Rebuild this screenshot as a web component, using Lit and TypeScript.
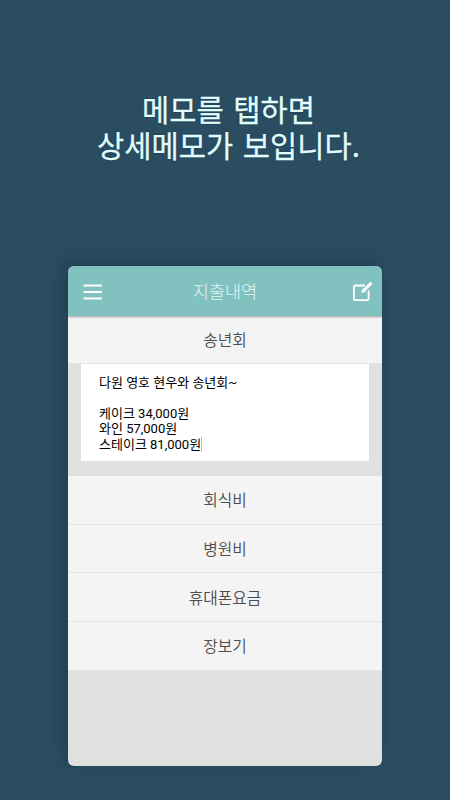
import { LitElement, html, css } from "lit";
import { customElement } from "lit/decorators.js";

@customElement("app-root")
export class AppRoot extends LitElement {
  static styles = css`
    :host { display: flex; flex-direction: column; align-items: center; box-sizing: border-box; width: 450px; height: 800px; background: #2a4d61; font-family: "Noto Sans CJK KR", sans-serif; overflow: hidden; }
    .headline { margin: 91px 0 0 7px; height: 175px; text-align: center; color: #e4fcfc; font-size: 29.6px; line-height: 36px; word-spacing: 3px; -webkit-text-stroke: 0.3px #e4fcfc; text-shadow: 0 0 2px #0b3a50; }
    .line { height: 36px; }
    .phone { width: 314px; height: 500px; flex: none; border-radius: 6px; overflow: hidden; background: #e0e0e0; box-shadow: 0 0 1px #0b2c42, -5px -5px 14px rgba(20, 35, 50, 0.3); }
    .bar { position: relative; height: 50px; background: #81c2c1; color: #e3f6f5; display: flex; align-items: center; padding: 1px 9px 0 15px; box-sizing: border-box; font-size: 17.5px; font-weight: 300; box-shadow: 0 1px 2px rgba(0, 0, 0, 0.35); }
    .title { flex: 1; text-align: center; line-height: 24px; padding: 0 0 1px 0; margin-left: -5px; }
    .row { height: 48.7px; box-sizing: border-box; border-bottom: 1px solid #e4e4e4; background: #f4f4f4; color: #4c4c4c; font-size: 15.8px; font-weight: 350; display: flex; align-items: center; justify-content: center; }
    .first { height: 48px; }
    .memo { margin: 0 13px 15px; height: 97px; background: #fff; padding: 10.5px 18px; box-sizing: border-box; font-family: Roboto, "Noto Sans CJK KR", sans-serif; font-size: 13px; line-height: 15.6px; color: #000; }
    .text { height: 15.6px; white-space: pre; }
    .caret { display: inline-block; width: 1px; height: 15px; background: #bbb; vertical-align: -3px; }
    svg { display: block; fill: none; stroke: #fff; stroke-linecap: round; stroke-linejoin: round; }
  `;

  render() {
    return html`<div class="headline"><div class="line">메모를 탭하면</div><div class="line">상세메모가 보입니다.</div></div>
      <main class="phone">
        <header class="bar">
          <svg width="20" height="18" viewBox="0 0 20 18"><path stroke-width="2" d="M1.3 2.5H18M1.3 9H18M1.3 15.5H18" /></svg>
          <span class="title">지출내역</span>
          <svg width="21" height="22" viewBox="0 0 21 22"><path stroke-width="1.8" d="M12.3 4.5H3.3Q1.9 4.5 1.9 5.9V17.8Q1.9 19.2 3.3 19.2H15.2Q16.6 19.2 16.6 17.8V10.2" /><path stroke-width="3" d="M11.7 9.5L18.6 2.7" /><path fill="#fff" stroke-width=".6" d="M10.6 8.4L9.8 11.6L13 10.7Z" /></svg>
        </header>
        <div class="row first">송년회</div>
        <div class="memo">
          ${["다원 영호 현우와 송년회~", "", "케이크 34,000원", "와인 57,000원"].map((t) => html`<div class="text">${t}</div>`)}
          <div class="text">스테이크 81,000원<span class="caret"></span></div>
        </div>
        ${["회식비", "병원비", "휴대폰요금", "장보기"].map((t) => html`<div class="row">${t}</div>`)}
      </main>`;
  }
}
